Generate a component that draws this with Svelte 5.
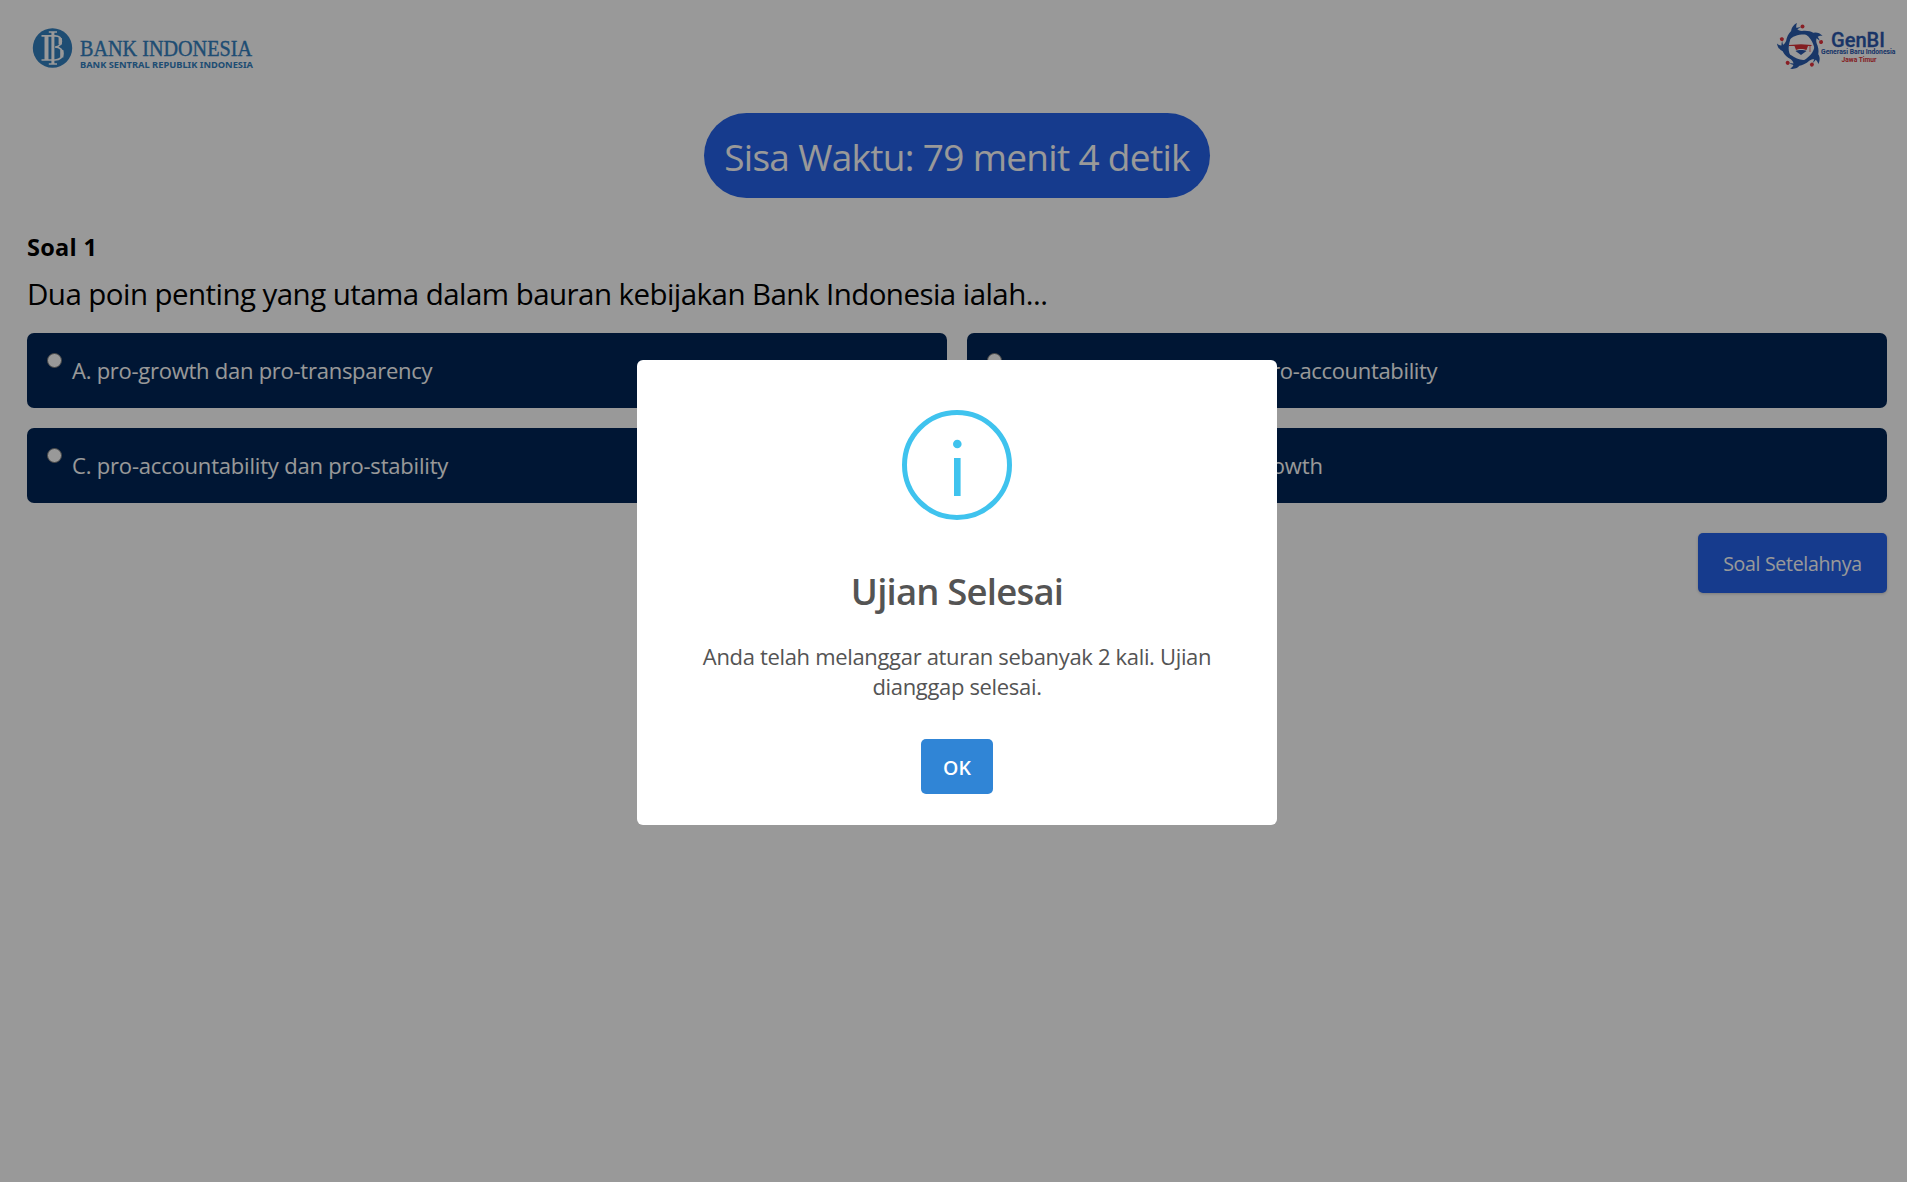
<script lang="ts">
  const options = [
    { id: 'a', text: 'A. pro-growth dan pro-transparency' },
    { id: 'b', text: 'B. pro-transparency dan pro-accountability' },
    { id: 'c', text: 'C. pro-accountability dan pro-stability' },
    { id: 'd', text: 'D. pro-stability dan pro-growth' }
  ];
  const arms = [0, 72, 144, 216, 288];
</script>

<div class="page">
  <header>
    <svg class="bi" viewBox="0 0 224 44" role="img" aria-label="Bank Indonesia">
      <circle cx="20.5" cy="22" r="19.7" fill="#3380c0" />
      <g fill="none" stroke="#fff">
        <path d="M9.500 9.800H23c8.500 0 8.500 10.600 0 11.200c10.500 0 10.500 13 0 13H9.500" stroke-width="1.700" />
        <path d="M14.500 10v24" stroke-width="4" />
        <path d="M28.200 12v6.500M29.800 24v7.500" stroke-width="3.200" />
        <path d="M20.900 11v9.200M20.900 22.500v10.500" stroke="#3380c0" stroke-width="5" />
        <path d="M20.900 6v32" stroke-width="3" />
        <path d="M16.800 6h8.200M16.800 38h8.200" stroke-width="1.600" />
      </g>
      <text class="bi-name" x="48" y="29.700" textLength="172" lengthAdjust="spacingAndGlyphs">BANK INDONESIA</text>
      <text class="bi-sub" x="48" y="42.200" textLength="173" lengthAdjust="spacingAndGlyphs">BANK SENTRAL REPUBLIK INDONESIA</text>
    </svg>
    <svg class="genbi" viewBox="0 0 120 50" role="img" aria-label="GenBI Jawa Timur">
      <g transform="translate(24 27)">
        {#each arms as a}
          <g transform="rotate({a})">
            <path d="M-4 -24C-6 -19 -4 -16.500 1 -16C9 -17 16 -14 19 -6C14 -11 9 -13 3 -12.500C-3 -12.500 -9 -11 -12.500 -6C-13 -9 -12 -12 -9.500 -14.500C-10.500 -18 -8 -22 -4 -24Z" fill="#2a5cae" />
            <circle cx="1.500" cy="-20.600" r="2" fill="#e5343f" />
          </g>
        {/each}
        <path d="M-12 -2L0 -2.700L10.500 -2V-1H7L5.500 3C3 1.500 -3 1.500 -5 3L-6.500 -1H-12Z" fill="#dc3338" />
        <path d="M-5.500 3.900C-3 2.700 3 2.700 5.500 3.900L0 8Z" fill="#2a57ac" />
        <path d="M9 -1V5" stroke="#dc3338" stroke-width=".7" />
      </g>
      <text class="gen-name" x="54" y="26.700" textLength="54" lengthAdjust="spacingAndGlyphs">GenBI</text>
      <text class="gen-sub" x="44" y="33.800" textLength="74.500" lengthAdjust="spacingAndGlyphs">Generasi Baru Indonesia</text>
      <text class="gen-region" x="64.500" y="41.500" textLength="35" lengthAdjust="spacingAndGlyphs">Jawa Timur</text>
    </svg>
  </header>

  <main>
    <div class="timer">Sisa Waktu: 79 menit 4 detik</div>
    <h1>Soal 1</h1>
    <p class="question">Dua poin penting yang utama dalam bauran kebijakan Bank Indonesia ialah...</p>
    <div class="options">
      {#each options as o (o.id)}
        <label class="option {o.id}">
          <input type="radio" name="answer" value={o.id} />
          <span>{o.text}</span>
        </label>
      {/each}
    </div>
    <div class="actions"><button class="next">Soal Setelahnya</button></div>
  </main>
</div>

<div class="overlay">
  <div class="modal" role="dialog" aria-modal="true">
    <svg class="info" viewBox="0 0 110 110" aria-hidden="true">
      <circle cx="55" cy="55" r="52.500" fill="none" stroke="#3fc3ee" stroke-width="5" />
      <circle cx="55.300" cy="34" r="4.300" fill="#3fc3ee" />
      <path d="M55.300 48v38" stroke="#3fc3ee" stroke-width="6.600" />
    </svg>
    <h2>Ujian Selesai</h2>
    <p>Anda telah melanggar aturan sebanyak 2 kali. Ujian dianggap selesai.</p>
    <button class="ok">OK</button>
  </div>
</div>

<style>
  :global(body) {
    background: #fff;
    overflow: hidden;
    font-family: 'Open Sans', 'Noto Sans', sans-serif;
  }
  h1, h2, p { margin: 0; }
  button { border: 0; font-family: inherit; }
  .page { height: 1182px; box-sizing: border-box; color: #000; }
  header {
    display: flex;
    justify-content: space-between;
    align-items: flex-start;
    height: 113px;
    box-sizing: border-box;
    padding: 20px 10px 0 32px;
  }
  header svg { overflow: visible; }
  .bi { width: 224px; height: 44px; margin-top: 6px; }
  .genbi { width: 120px; height: 50px; }
  .bi-name { font: 22.500px 'Liberation Serif', serif; fill: #3380c0; stroke: #3380c0; stroke-width: .4; }
  .bi-sub { font: 700 9.600px 'Noto Sans', sans-serif; fill: #3380c0; }
  .gen-name { font: 500 20.500px Roboto, sans-serif; fill: #2a57ac; stroke: #2a57ac; stroke-width: .3; }
  .gen-sub { font: 700 7px Roboto, sans-serif; fill: #2a57ac; }
  .gen-region { font: 700 7px Roboto, sans-serif; fill: #dc3338; }
  main { display: flex; flex-direction: column; padding: 0 20px 0 27px; }
  .timer {
    align-self: center;
    width: 506px;
    height: 85px;
    box-sizing: border-box;
    border-radius: 43px;
    background: #2563eb;
    color: #fff;
    font-size: 37px;
    line-height: 88px;
    letter-spacing: -.68px;
    text-align: center;
    white-space: nowrap;
  }
  h1 { margin-top: 31px; font-size: 23.500px; line-height: 37px; letter-spacing: .3px; }
  .question { margin-top: 8px; font-size: 29.500px; line-height: 40px; letter-spacing: -.555px; white-space: nowrap; }
  .options { margin-top: 19px; display: grid; grid-template-columns: 1fr 1fr; gap: 20px; }
  .option {
    display: flex;
    align-items: flex-start;
    height: 75px;
    box-sizing: border-box;
    padding: 20px;
    border-radius: 7px;
    background: #002657;
    color: #fff;
    font-size: 22px;
    line-height: 34px;
    letter-spacing: -.26px;
    white-space: nowrap;
  }
  .option.b { letter-spacing: -.34px; }
  .option.c { letter-spacing: -.19px; }
  .option.d { letter-spacing: -.16px; }
  .option input {
    appearance: none;
    flex: none;
    width: 15px;
    height: 15px;
    margin: 0 10px 0 0;
    box-sizing: border-box;
    border: 1px solid #767676;
    border-radius: 50%;
    background: #fff;
  }
  .actions { display: flex; justify-content: flex-end; margin-top: 30px; }
  .next {
    width: 189px;
    height: 60px;
    padding: 1px 0 0;
    border-radius: 5px;
    background: #2563eb;
    color: #fff;
    font-size: 19.500px;
    letter-spacing: -.3px;
    box-shadow: 0 1px 3px rgba(0, 0, 0, .2);
  }
  .overlay {
    position: fixed;
    inset: 0;
    display: flex;
    align-items: center;
    justify-content: center;
    padding: 3px 0 0 7px;
    background: rgba(0, 0, 0, .4);
  }
  .modal {
    display: flex;
    flex-direction: column;
    align-items: center;
    width: 640px;
    height: 465px;
    box-sizing: border-box;
    padding-top: 50px;
    border-radius: 6px;
    background: #fff;
    color: #545454;
    text-align: center;
  }
  .info { width: 110px; height: 110px; flex: none; }
  h2 { margin-top: 44px; font-size: 36.500px; line-height: 54px; font-weight: 600; letter-spacing: -.8px; }
  .modal p { width: 540px; margin-top: 23px; font-size: 22px; line-height: 30px; letter-spacing: -.33px; }
  .ok {
    width: 72px;
    height: 55px;
    margin-top: 38px;
    padding: 1px 0 0;
    border-radius: 5px;
    background: #3085d6;
    color: #fff;
    font-size: 19.500px;
    font-weight: 600;
  }
</style>
